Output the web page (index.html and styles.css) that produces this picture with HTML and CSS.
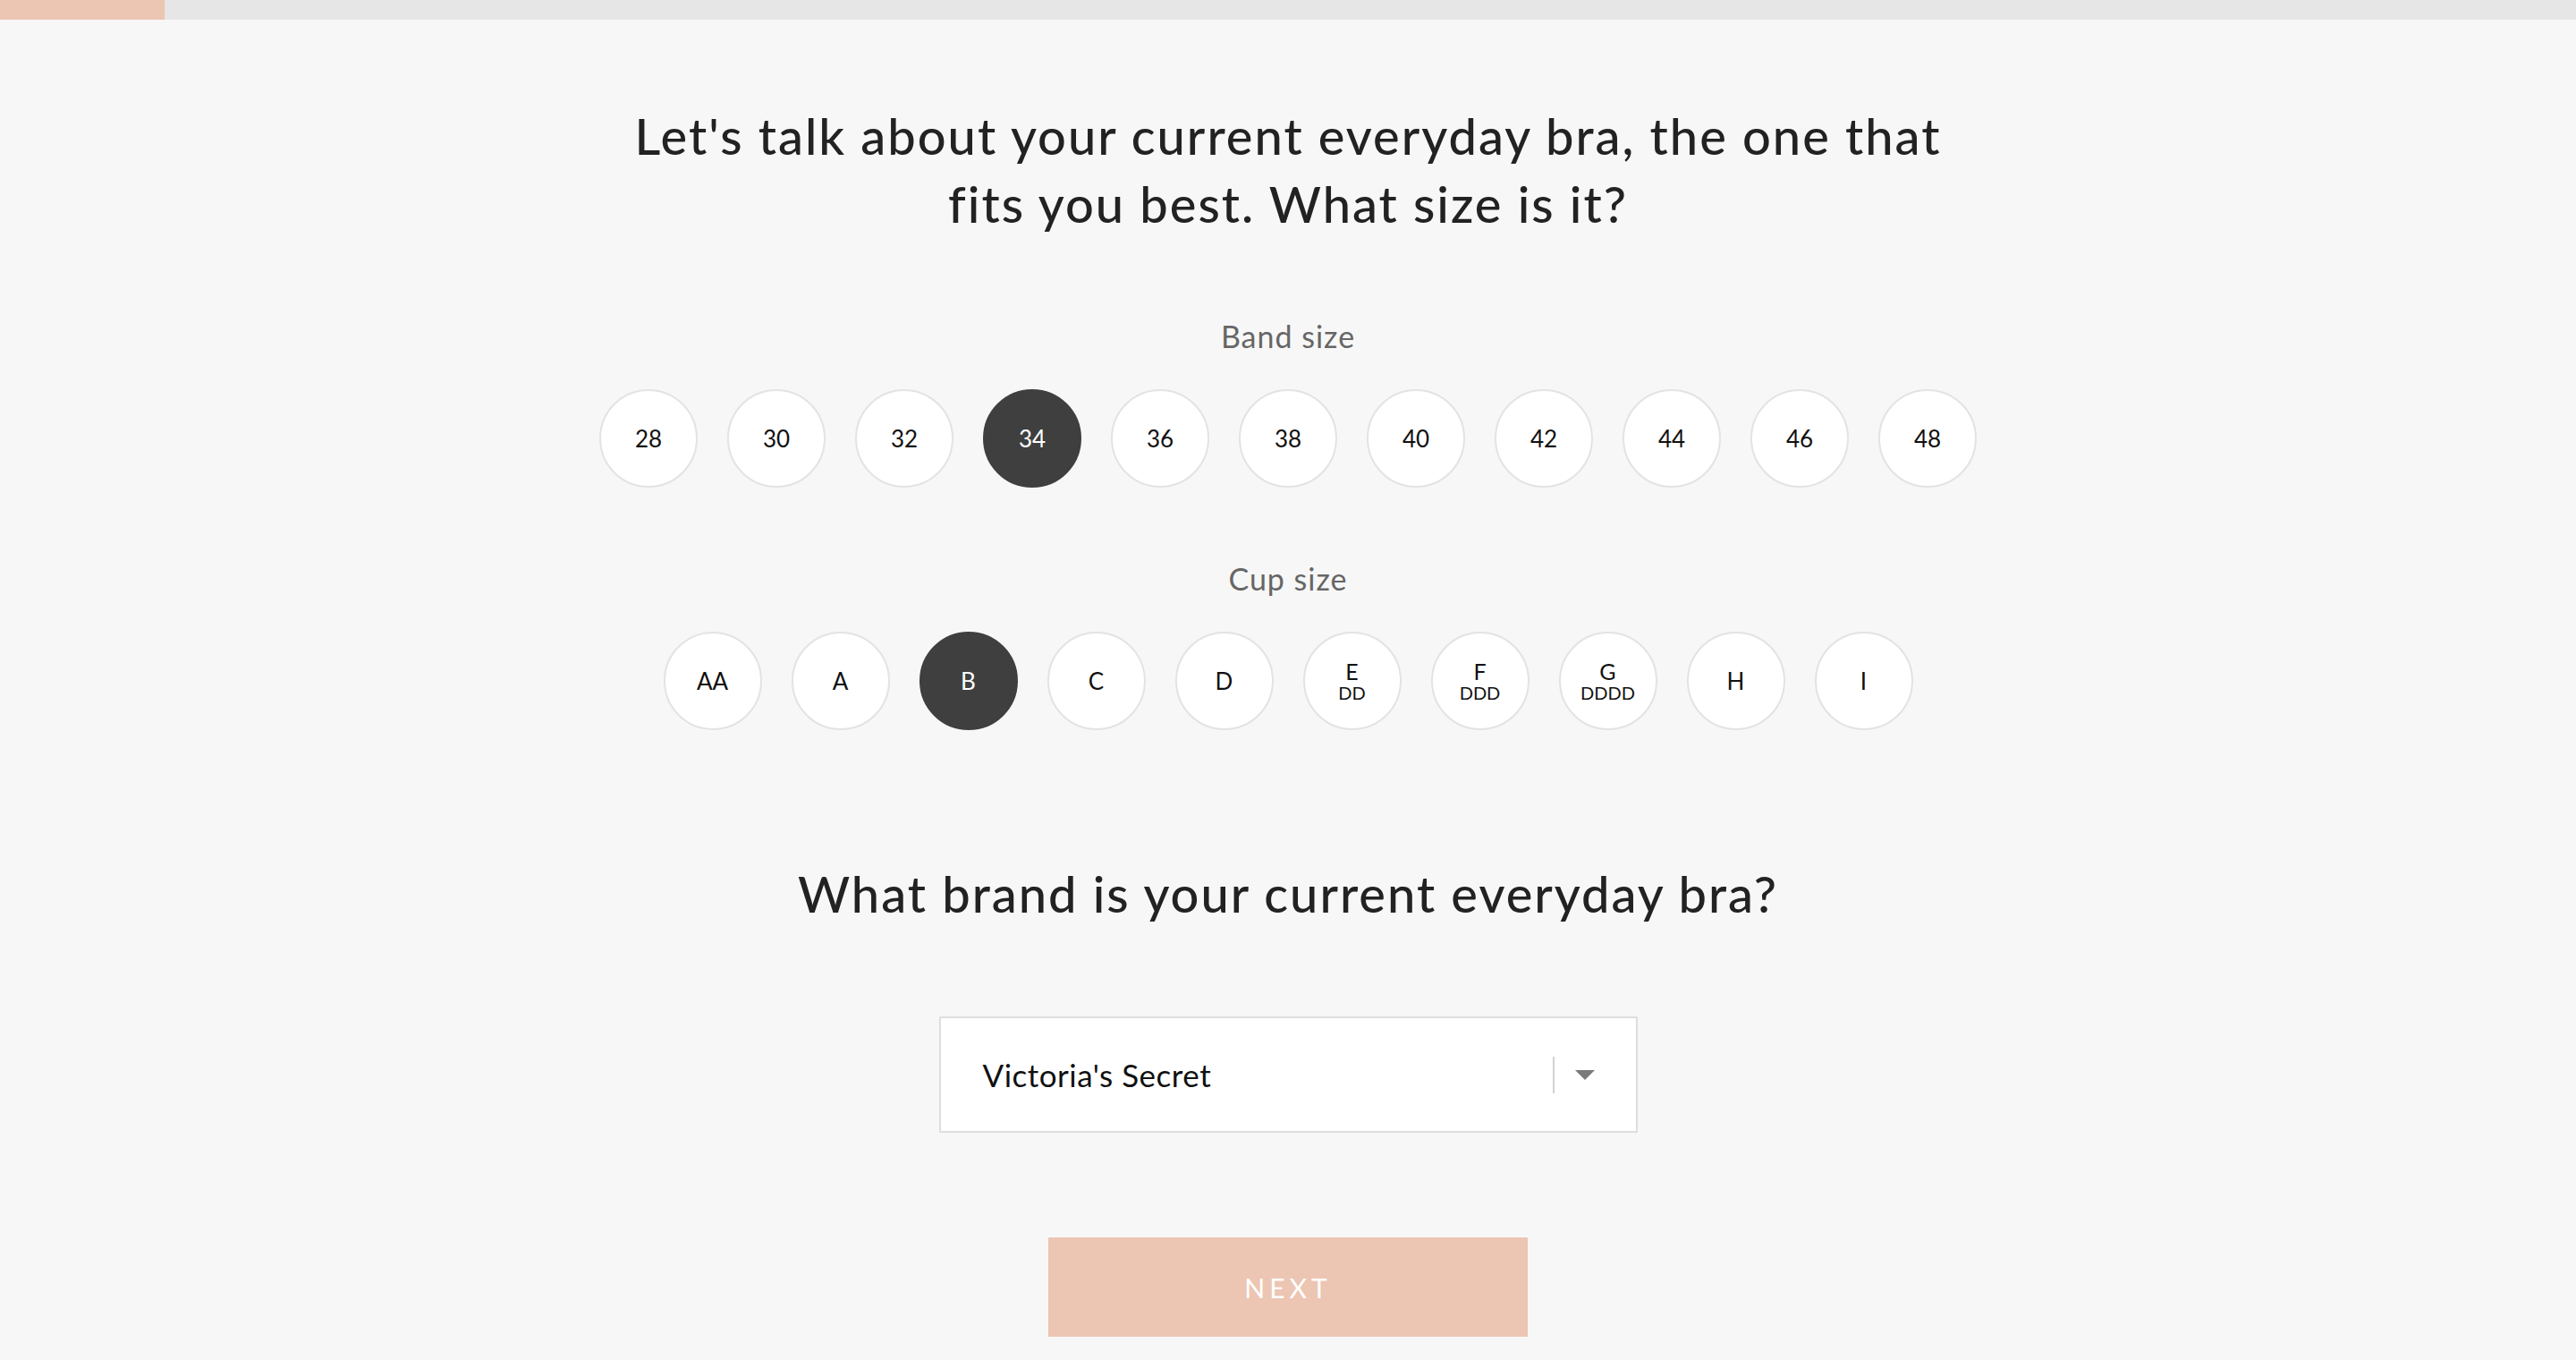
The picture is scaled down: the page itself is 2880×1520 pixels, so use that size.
FILE: index.html
```html
<!DOCTYPE html>
<html lang="en">
	<head>
		<meta charset="utf-8">
		<meta name="viewport" content="width=device-width, initial-scale=1.0">
		<title>Bra size</title>
		<link rel="stylesheet" href="styles.css">
	</head>

	<body>
		<div class="progress"><div class="progress-fill" style="width: 184px"></div></div>

		<main>
			<h1 class="question">Let's talk about your current everyday bra, the one that<br>fits you best. What size is it?</h1>

			<h2 class="label">Band size</h2>
			<div class="options">
				<div class="option">28</div>
				<div class="option">30</div>
				<div class="option">32</div>
				<div class="option selected">34</div>
				<div class="option">36</div>
				<div class="option">38</div>
				<div class="option">40</div>
				<div class="option">42</div>
				<div class="option">44</div>
				<div class="option">46</div>
				<div class="option">48</div>
			</div>

			<h2 class="label cup">Cup size</h2>
			<div class="options">
				<div class="option">AA</div>
				<div class="option">A</div>
				<div class="option selected">B</div>
				<div class="option">C</div>
				<div class="option">D</div>
				<div class="option stack"><span>E</span><small>DD</small></div>
				<div class="option stack"><span>F</span><small>DDD</small></div>
				<div class="option stack"><span>G</span><small>DDDD</small></div>
				<div class="option">H</div>
				<div class="option">I</div>
			</div>

			<h1 class="question brand">What brand is your current everyday bra?</h1>

			<div class="select">
				<span class="select-value">Victoria's Secret</span>
				<span class="select-sep"></span>
				<span class="select-arrow"></span>
			</div>

			<button class="next">NEXT</button>
		</main>
	</body>
</html>
```

FILE: styles.css
```css
html, body{
	margin: 0;
	background-color: #f7f7f7;
}
body{
	font-family: Lato, "Liberation Sans", sans-serif;
	color: #222;
}
.progress{
	height: 22px;
	background-color: #e6e6e6;
}
.progress-fill{
	height: 100%;
	background-color: #ecc5b3;
}
main{
	display: flex;
	flex-direction: column;
	align-items: center;
}
.question{
	margin: 92px 0 0;
	font-size: 56px;
	line-height: 76px;
	font-weight: 500;
	letter-spacing: 2px;
	text-align: center;
	color: #222;
}
.label{
	margin: 90px 0 0;
	font-size: 34px;
	line-height: 40px;
	font-weight: 400;
	letter-spacing: 1px;
	color: #666;
}
.label.cup{
	margin-top: 82px;
}
.options{
	display: flex;
	gap: 33px;
	margin-top: 39px;
}
.option{
	box-sizing: border-box;
	display: flex;
	flex-direction: column;
	align-items: center;
	justify-content: center;
	width: 110px;
	height: 110px;
	border: 2px solid #e3e3e3;
	border-radius: 50%;
	background-color: #fff;
	font-size: 26px;
	color: #111;
	cursor: pointer;
}
.option.selected{
	border-color: #3f3f3f;
	background-color: #3f3f3f;
	color: #fff;
}
.stack span{
	font-size: 25px;
	line-height: 25px;
}
.stack small{
	font-size: 20px;
	line-height: 22px;
}
.question.brand{
	margin-top: 145px;
}
.select{
	box-sizing: border-box;
	display: flex;
	align-items: center;
	width: 781px;
	height: 130px;
	margin-top: 99px;
	padding: 0 46px 0 47px;
	border: 2px solid #dedede;
	background-color: #fff;
}
.select-value{
	flex: 1;
	font-size: 35px;
	letter-spacing: 0.5px;
	color: #111;
}
.select-sep{
	width: 2px;
	height: 41px;
	background-color: #d2d2d2;
}
.select-arrow{
	margin-left: 23px;
	border-left: 11px solid transparent;
	border-right: 11px solid transparent;
	border-top: 11px solid #7a7a7a;
}
.next{
	width: 536px;
	height: 111px;
	margin-top: 117px;
	border: none;
	background-color: #ecc5b3;
	font-family: inherit;
	font-size: 30px;
	letter-spacing: 5px;
	color: #fff;
	cursor: pointer;
}
```
